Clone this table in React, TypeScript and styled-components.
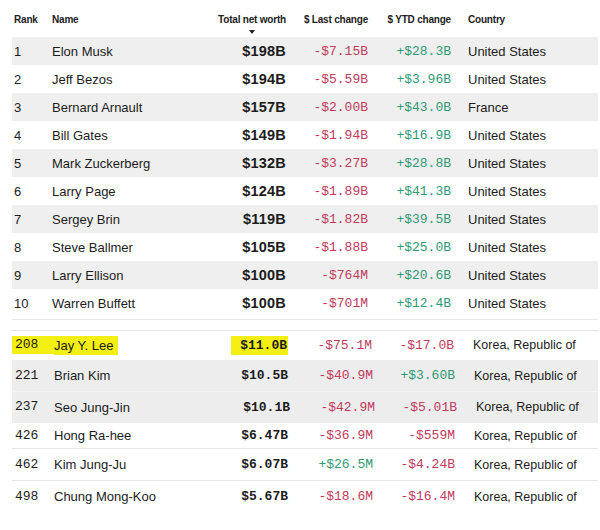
import React from "react";
import styled, { createGlobalStyle } from "styled-components";

const Global = createGlobalStyle`
  html, body { margin: 0; padding: 0; background: #fff; }
  body { font-family: "Liberation Sans", Arial, sans-serif; color: #1c1c1c; }
`;

const RED = "#c23a5c";
const GREEN = "#2f9a76";
const YELLOW = "#f3ef12";

const Page = styled.div`
  width: 600px;
  height: 530px;
  overflow: hidden;
  background: #fff;
  padding: 0 2px 0 12px;
  box-sizing: border-box;
`;

const topCols = "40px 148px 86px 82px 83px 1fr";
const bottomCols = "42px 148px 87px 84px 82px 1fr";

const HeaderRow = styled.div`
  display: grid;
  grid-template-columns: ${topCols};
  height: 37px;
  padding-top: 14px;
  box-sizing: border-box;
  font-size: 10px;
  font-weight: 700;
  color: #222;
  letter-spacing: -0.2px;
`;

const HeadCell = styled.div<{ $right?: boolean; $pad?: number }>`
  text-align: ${(p) => (p.$right ? "right" : "left")};
  padding-left: ${(p) => p.$pad ?? 0}px;
  line-height: 12px;
  display: flex;
  justify-content: ${(p) => (p.$right ? "flex-end" : "flex-start")};
  align-items: flex-start;
`;

const SortLabel = styled.span`
  display: inline-flex;
  flex-direction: column;
  align-items: center;
`;

const SortArrow = styled.span`
  display: block;
  width: 0;
  height: 0;
  margin-top: 4px;
  border-left: 3px solid transparent;
  border-right: 3px solid transparent;
  border-top: 4px solid #222;
`;

const TopRow = styled.div<{ $shade: boolean }>`
  display: grid;
  grid-template-columns: ${topCols};
  height: 28px;
  align-items: center;
  background: ${(p) => (p.$shade ? "#efefef" : "#fff")};
`;

const RankCell = styled.div`
  font-size: 13px;
  padding-left: 2px;
`;

const NameCell = styled.div`
  font-size: 13px;
  white-space: nowrap;
`;

const Worth = styled.div`
  font-size: 14.5px;
  font-weight: 700;
  text-align: right;
  letter-spacing: 0.2px;
`;

const Change = styled.div<{ $neg: boolean; $shift?: number }>`
  font-family: "Liberation Mono", "Courier New", monospace;
  font-size: 13px;
  text-align: right;
  color: ${(p) => (p.$neg ? RED : GREEN)};
  white-space: nowrap;
  transform: translateX(${(p) => p.$shift ?? 0}px);
`;

const Country = styled.div<{ $pad: number; $size?: number }>`
  font-size: ${(p) => p.$size ?? 13}px;
  padding-left: ${(p) => p.$pad}px;
  white-space: nowrap;
`;

const Divider = styled.div`
  height: 1px;
  margin-top: 2px;
  background: #e8e8e8;
`;

const BottomTable = styled.div`
  margin-top: 10px;
  border-top: 1px solid #e4e4e4;
`;

const BottomRow = styled.div<{ $shade: boolean; $border: boolean }>`
  display: grid;
  grid-template-columns: ${bottomCols};
  align-items: center;
  box-sizing: border-box;
  background: ${(p) => (p.$shade ? "#ededed" : "#fff")};
  border-bottom: 1px solid
    ${(p) => (p.$border ? (p.$shade ? "#f4f4f4" : "#e6e6e6") : "transparent")};
`;

const MonoRank = styled.div<{ $on: boolean }>`
  justify-self: stretch;
  margin-right: -4px;
  font-family: "Liberation Mono", "Courier New", monospace;
  font-size: 13px;
  line-height: 14px;
  padding: 2px 0 2px 3px;
  background: ${(p) => (p.$on ? YELLOW : "transparent")};
`;

const MonoWorth = styled.div<{ $shift?: number }>`
  font-family: "Liberation Mono", "Courier New", monospace;
  font-size: 13px;
  font-weight: 700;
  text-align: right;
  transform: translateX(${(p) => p.$shift ?? 0}px);
`;

const Mark = styled.span<{ $on: boolean }>`
  background: ${(p) => (p.$on ? YELLOW : "transparent")};
  padding: 2px 4px 2px 0;
  line-height: 14px;
`;

const WorthMark = styled.span<{ $on: boolean }>`
  background: ${(p) => (p.$on ? YELLOW : "transparent")};
  padding: 2px 1px 2px 9px;
  line-height: 14px;
`;

const top = [
  ["1", "Elon Musk", "$198B", "-$7.15B", "+$28.3B", "United States"],
  ["2", "Jeff Bezos", "$194B", "-$5.59B", "+$3.96B", "United States"],
  ["3", "Bernard Arnault", "$157B", "-$2.00B", "+$43.0B", "France"],
  ["4", "Bill Gates", "$149B", "-$1.94B", "+$16.9B", "United States"],
  ["5", "Mark Zuckerberg", "$132B", "-$3.27B", "+$28.8B", "United States"],
  ["6", "Larry Page", "$124B", "-$1.89B", "+$41.3B", "United States"],
  ["7", "Sergey Brin", "$119B", "-$1.82B", "+$39.5B", "United States"],
  ["8", "Steve Ballmer", "$105B", "-$1.88B", "+$25.0B", "United States"],
  ["9", "Larry Ellison", "$100B", "-$764M", "+$20.6B", "United States"],
  ["10", "Warren Buffett", "$100B", "-$701M", "+$12.4B", "United States"],
];

type B = {
  r: string;
  n: string;
  w: string;
  l: string;
  y: string;
  h: number;
  shade: boolean;
  border: boolean;
  mark?: boolean;
  shift?: number;
};

const bottom: B[] = [
  { r: "208", n: "Jay Y. Lee", w: "$11.0B", l: "-$75.1M", y: "-$17.0B", h: 29, shade: false, border: false, mark: true, shift: -1 },
  { r: "221", n: "Brian Kim", w: "$10.5B", l: "-$40.9M", y: "+$3.60B", h: 32, shade: true, border: true },
  { r: "237", n: "Seo Jung-Jin", w: "$10.1B", l: "-$42.9M", y: "-$5.01B", h: 31, shade: true, border: false, shift: 2 },
  { r: "426", n: "Hong Ra-hee", w: "$6.47B", l: "-$36.9M", y: "-$559M", h: 26, shade: false, border: true },
  { r: "462", n: "Kim Jung-Ju", w: "$6.07B", l: "+$26.5M", y: "-$4.24B", h: 32, shade: false, border: true },
  { r: "498", n: "Chung Mong-Koo", w: "$5.67B", l: "-$18.6M", y: "-$16.4M", h: 32, shade: false, border: false },
];

export default function App() {
  return (
    <Page>
      <Global />
      <HeaderRow>
        <HeadCell $pad={2}>Rank</HeadCell>
        <HeadCell>Name</HeadCell>
        <HeadCell $right>
          <SortLabel>
            Total net worth
            <SortArrow />
          </SortLabel>
        </HeadCell>
        <HeadCell $right>$ Last change</HeadCell>
        <HeadCell $right>$ YTD change</HeadCell>
        <HeadCell $pad={17}>Country</HeadCell>
      </HeaderRow>
      {top.map((r, i) => (
        <TopRow key={r[0]} $shade={i % 2 === 0}>
          <RankCell>{r[0]}</RankCell>
          <NameCell>{r[1]}</NameCell>
          <Worth>{r[2]}</Worth>
          <Change $neg={r[3].startsWith("-")}>{r[3]}</Change>
          <Change $neg={r[4].startsWith("-")}>{r[4]}</Change>
          <Country $pad={17}>{r[5]}</Country>
        </TopRow>
      ))}
      <Divider />
      <BottomTable>
        {bottom.map((b) => (
          <BottomRow key={b.r} $shade={b.shade} $border={b.border} style={{ height: b.h }}>
            <MonoRank $on={!!b.mark}>{b.r}</MonoRank>
            <NameCell>
              <Mark $on={!!b.mark}>{b.n}</Mark>
            </NameCell>
            <MonoWorth $shift={b.shift}>
              <WorthMark $on={!!b.mark}>{b.w}</WorthMark>
            </MonoWorth>
            <Change $neg={b.l.startsWith("-")} $shift={b.shift}>{b.l}</Change>
            <Change $neg={b.y.startsWith("-")} $shift={b.shift}>{b.y}</Change>
            <Country $pad={19 + (b.shift ?? 0)} $size={12.5}>Korea, Republic of</Country>
          </BottomRow>
        ))}
      </BottomTable>
    </Page>
  );
}
